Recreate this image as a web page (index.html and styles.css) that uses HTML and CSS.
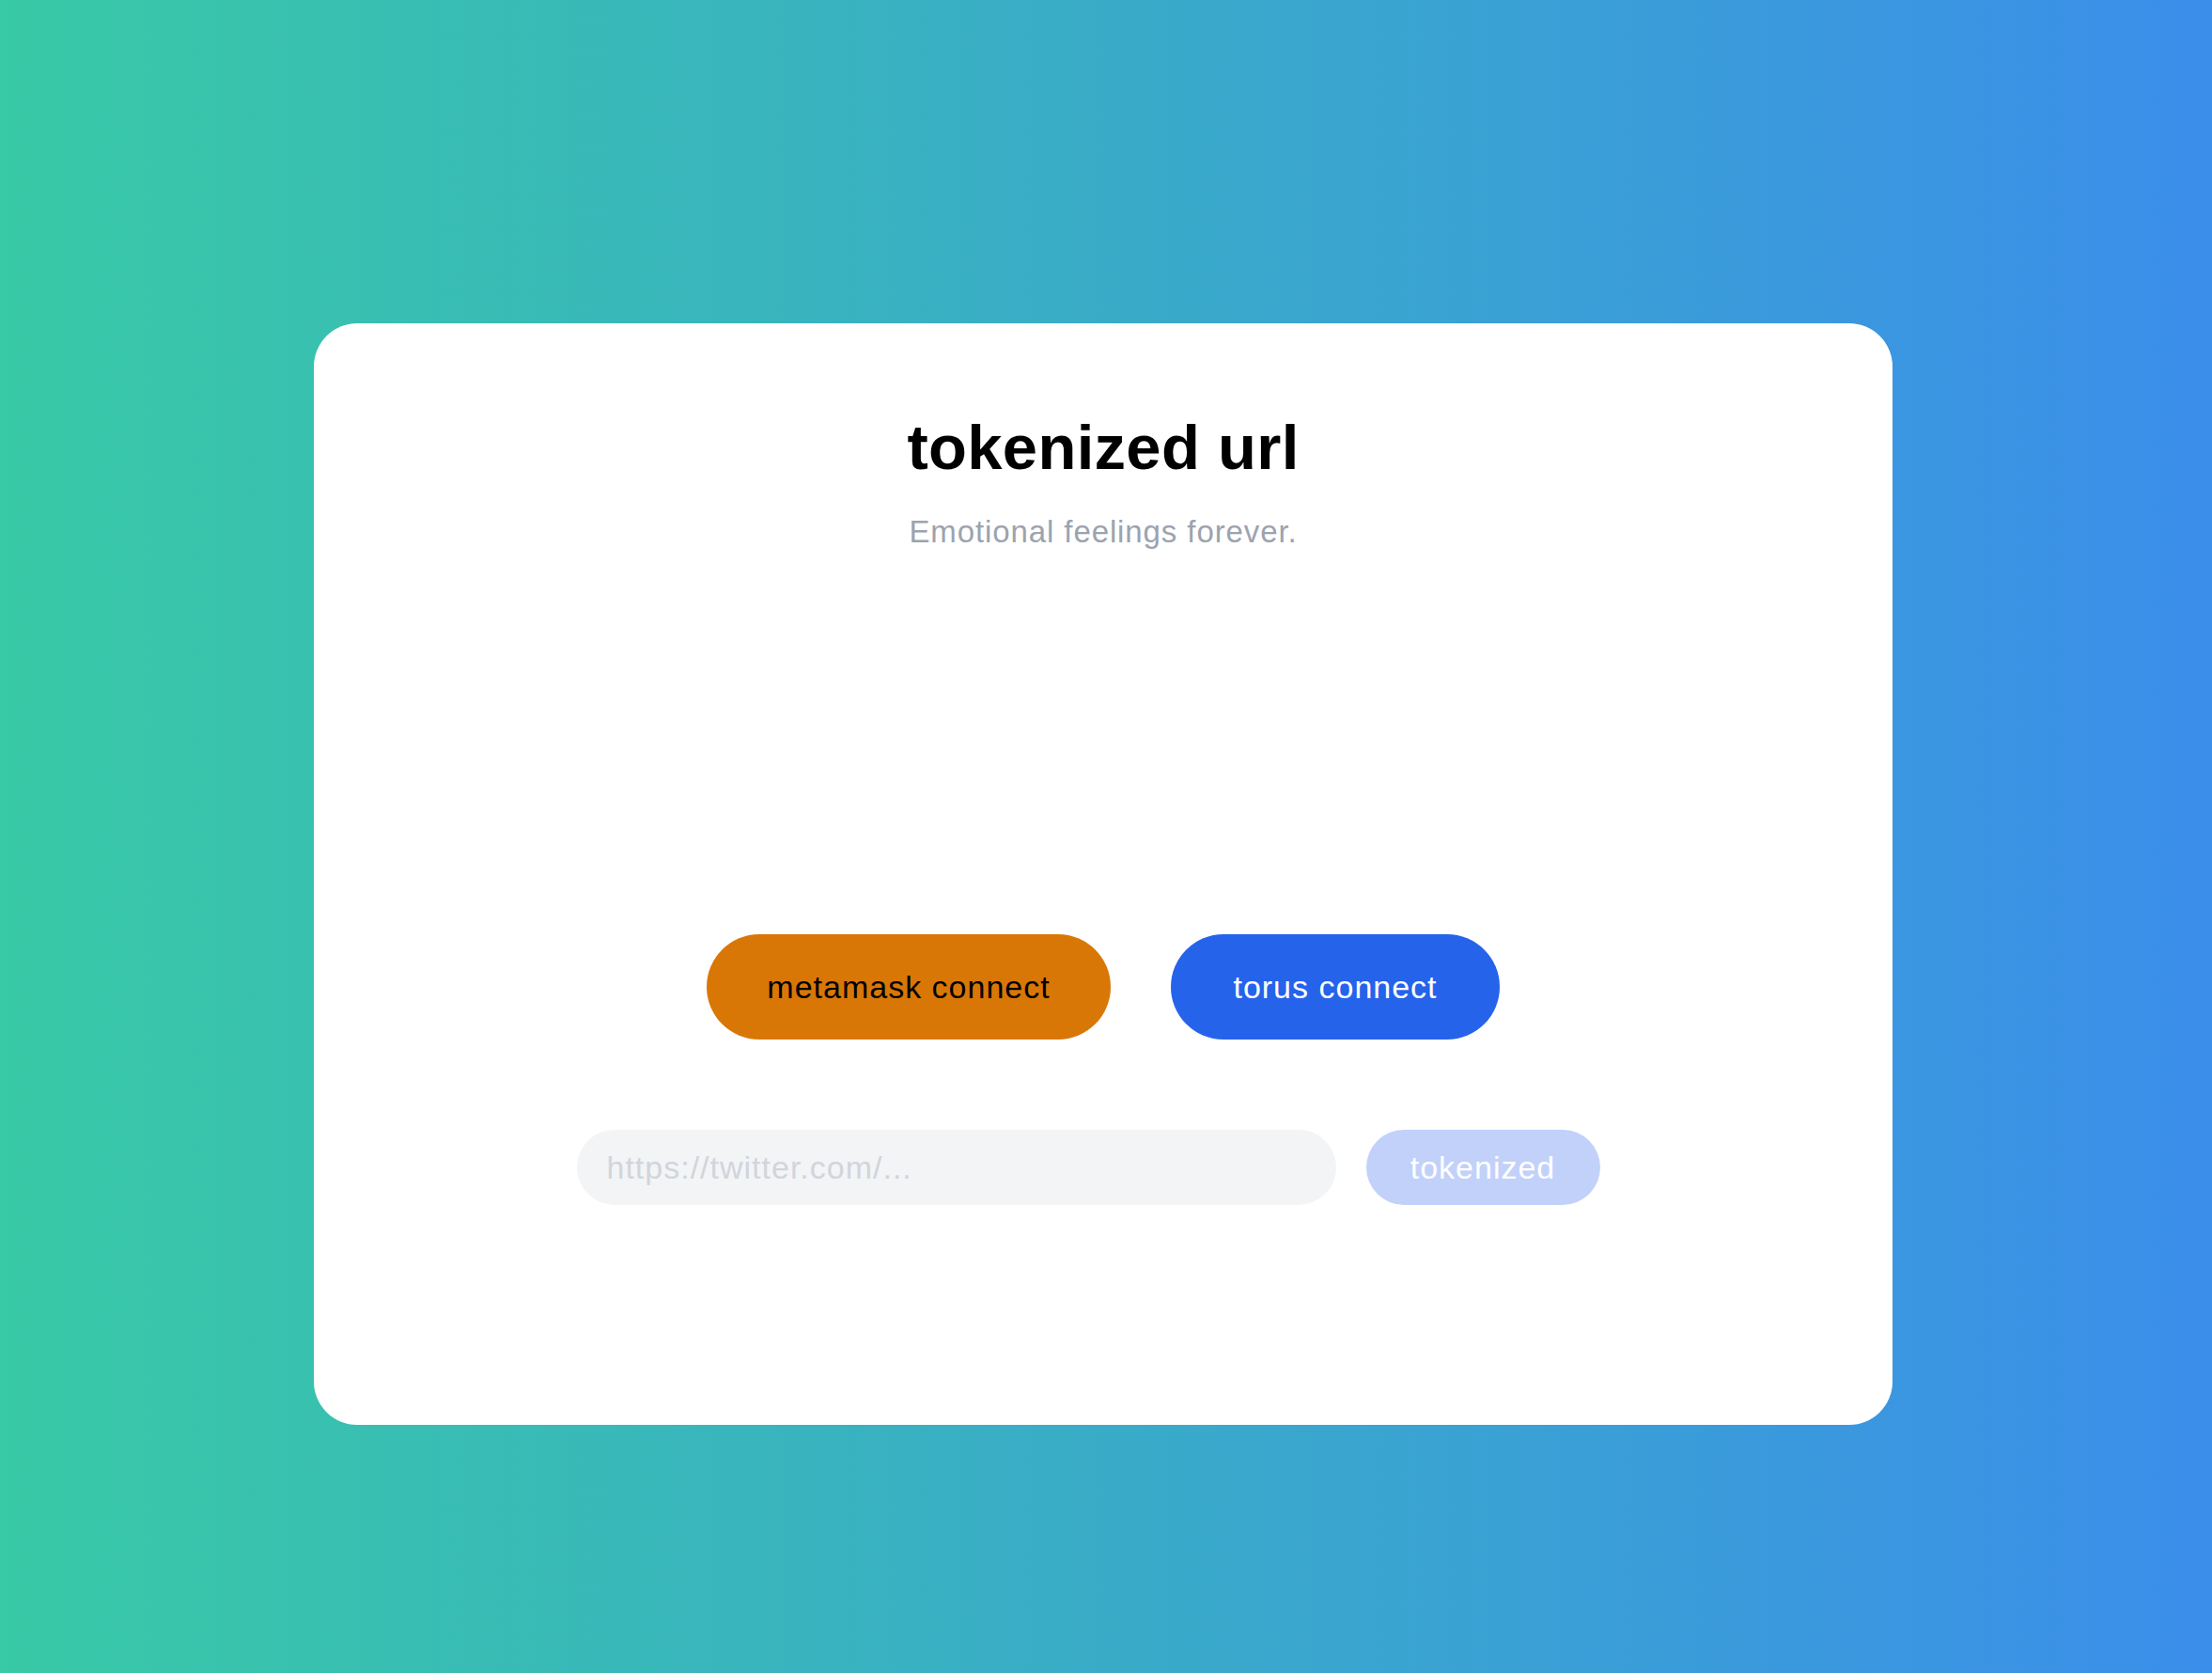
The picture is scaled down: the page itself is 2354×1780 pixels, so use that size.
FILE: index.html
```html
<!DOCTYPE html>
<html lang="en">
<head>
<meta charset="utf-8">
<title>tokenized url</title>
<link rel="stylesheet" href="styles.css">
</head>
<body>
<div class="page">
  <main class="card">
    <h1 class="title">tokenized url</h1>
    <p class="subtitle">Emotional feelings forever.</p>
    <div class="connect-row">
      <button class="btn btn-metamask">metamask connect</button>
      <button class="btn btn-torus">torus connect</button>
    </div>
    <div class="form-row">
      <input class="url-input" type="text" placeholder="https://twitter.com/...">
      <button class="btn-token">tokenized</button>
    </div>
  </main>
</div>
</body>
</html>
```
FILE: styles.css
```css
html, body {
  margin: 0;
  padding: 0;
}
body {
  width: 2354px;
  height: 1780px;
  background: linear-gradient(to right, #38c9a6, #3b8eea);
  font-family: "Liberation Sans", Arial, sans-serif;
  overflow: hidden;
}
.page {
  padding: 344px 0 0 334px;
}
.card {
  box-sizing: border-box;
  width: 1680px;
  height: 1172px;
  background: #ffffff;
  border-radius: 46px;
  padding-top: 92px;
  display: flex;
  flex-direction: column;
  align-items: center;
}
.title {
  margin: 0;
  font-size: 67px;
  line-height: 80px;
  font-weight: 700;
  color: #000000;
  letter-spacing: 0.3px;
}
.subtitle {
  margin: 30px 0 0;
  font-size: 33px;
  line-height: 40px;
  color: #9ca3af;
  letter-spacing: 0.9px;
}
.connect-row {
  margin-top: 408px;
  display: flex;
  gap: 64px;
  justify-content: center;
}
.btn {
  height: 112px;
  padding: 0;
  border: none;
  border-radius: 56px;
  font-family: "Liberation Sans", Arial, sans-serif;
  font-size: 34px;
  letter-spacing: 1px;
  cursor: pointer;
}
.btn-metamask {
  background: #d97706;
  color: #000000;
  width: 430px;
}
.btn-torus {
  background: #2563eb;
  color: #ffffff;
  width: 350px;
}
.form-row {
  margin-top: 96px;
  display: flex;
  justify-content: center;
}
.url-input {
  box-sizing: border-box;
  width: 808px;
  height: 80px;
  border: none;
  outline: none;
  border-radius: 40px;
  background: #f3f4f6;
  padding: 0 32px;
  font-family: "Liberation Sans", Arial, sans-serif;
  font-size: 34px;
  letter-spacing: 1px;
  color: #111827;
}
.url-input::placeholder {
  color: #d1d5db;
}
.btn-token {
  box-sizing: border-box;
  width: 249px;
  height: 80px;
  margin: 0 32px;
  border: none;
  border-radius: 40px;
  background: #c2d1fa;
  color: #ffffff;
  font-family: "Liberation Sans", Arial, sans-serif;
  font-size: 34px;
  letter-spacing: 1px;
  padding: 0;
}
```
